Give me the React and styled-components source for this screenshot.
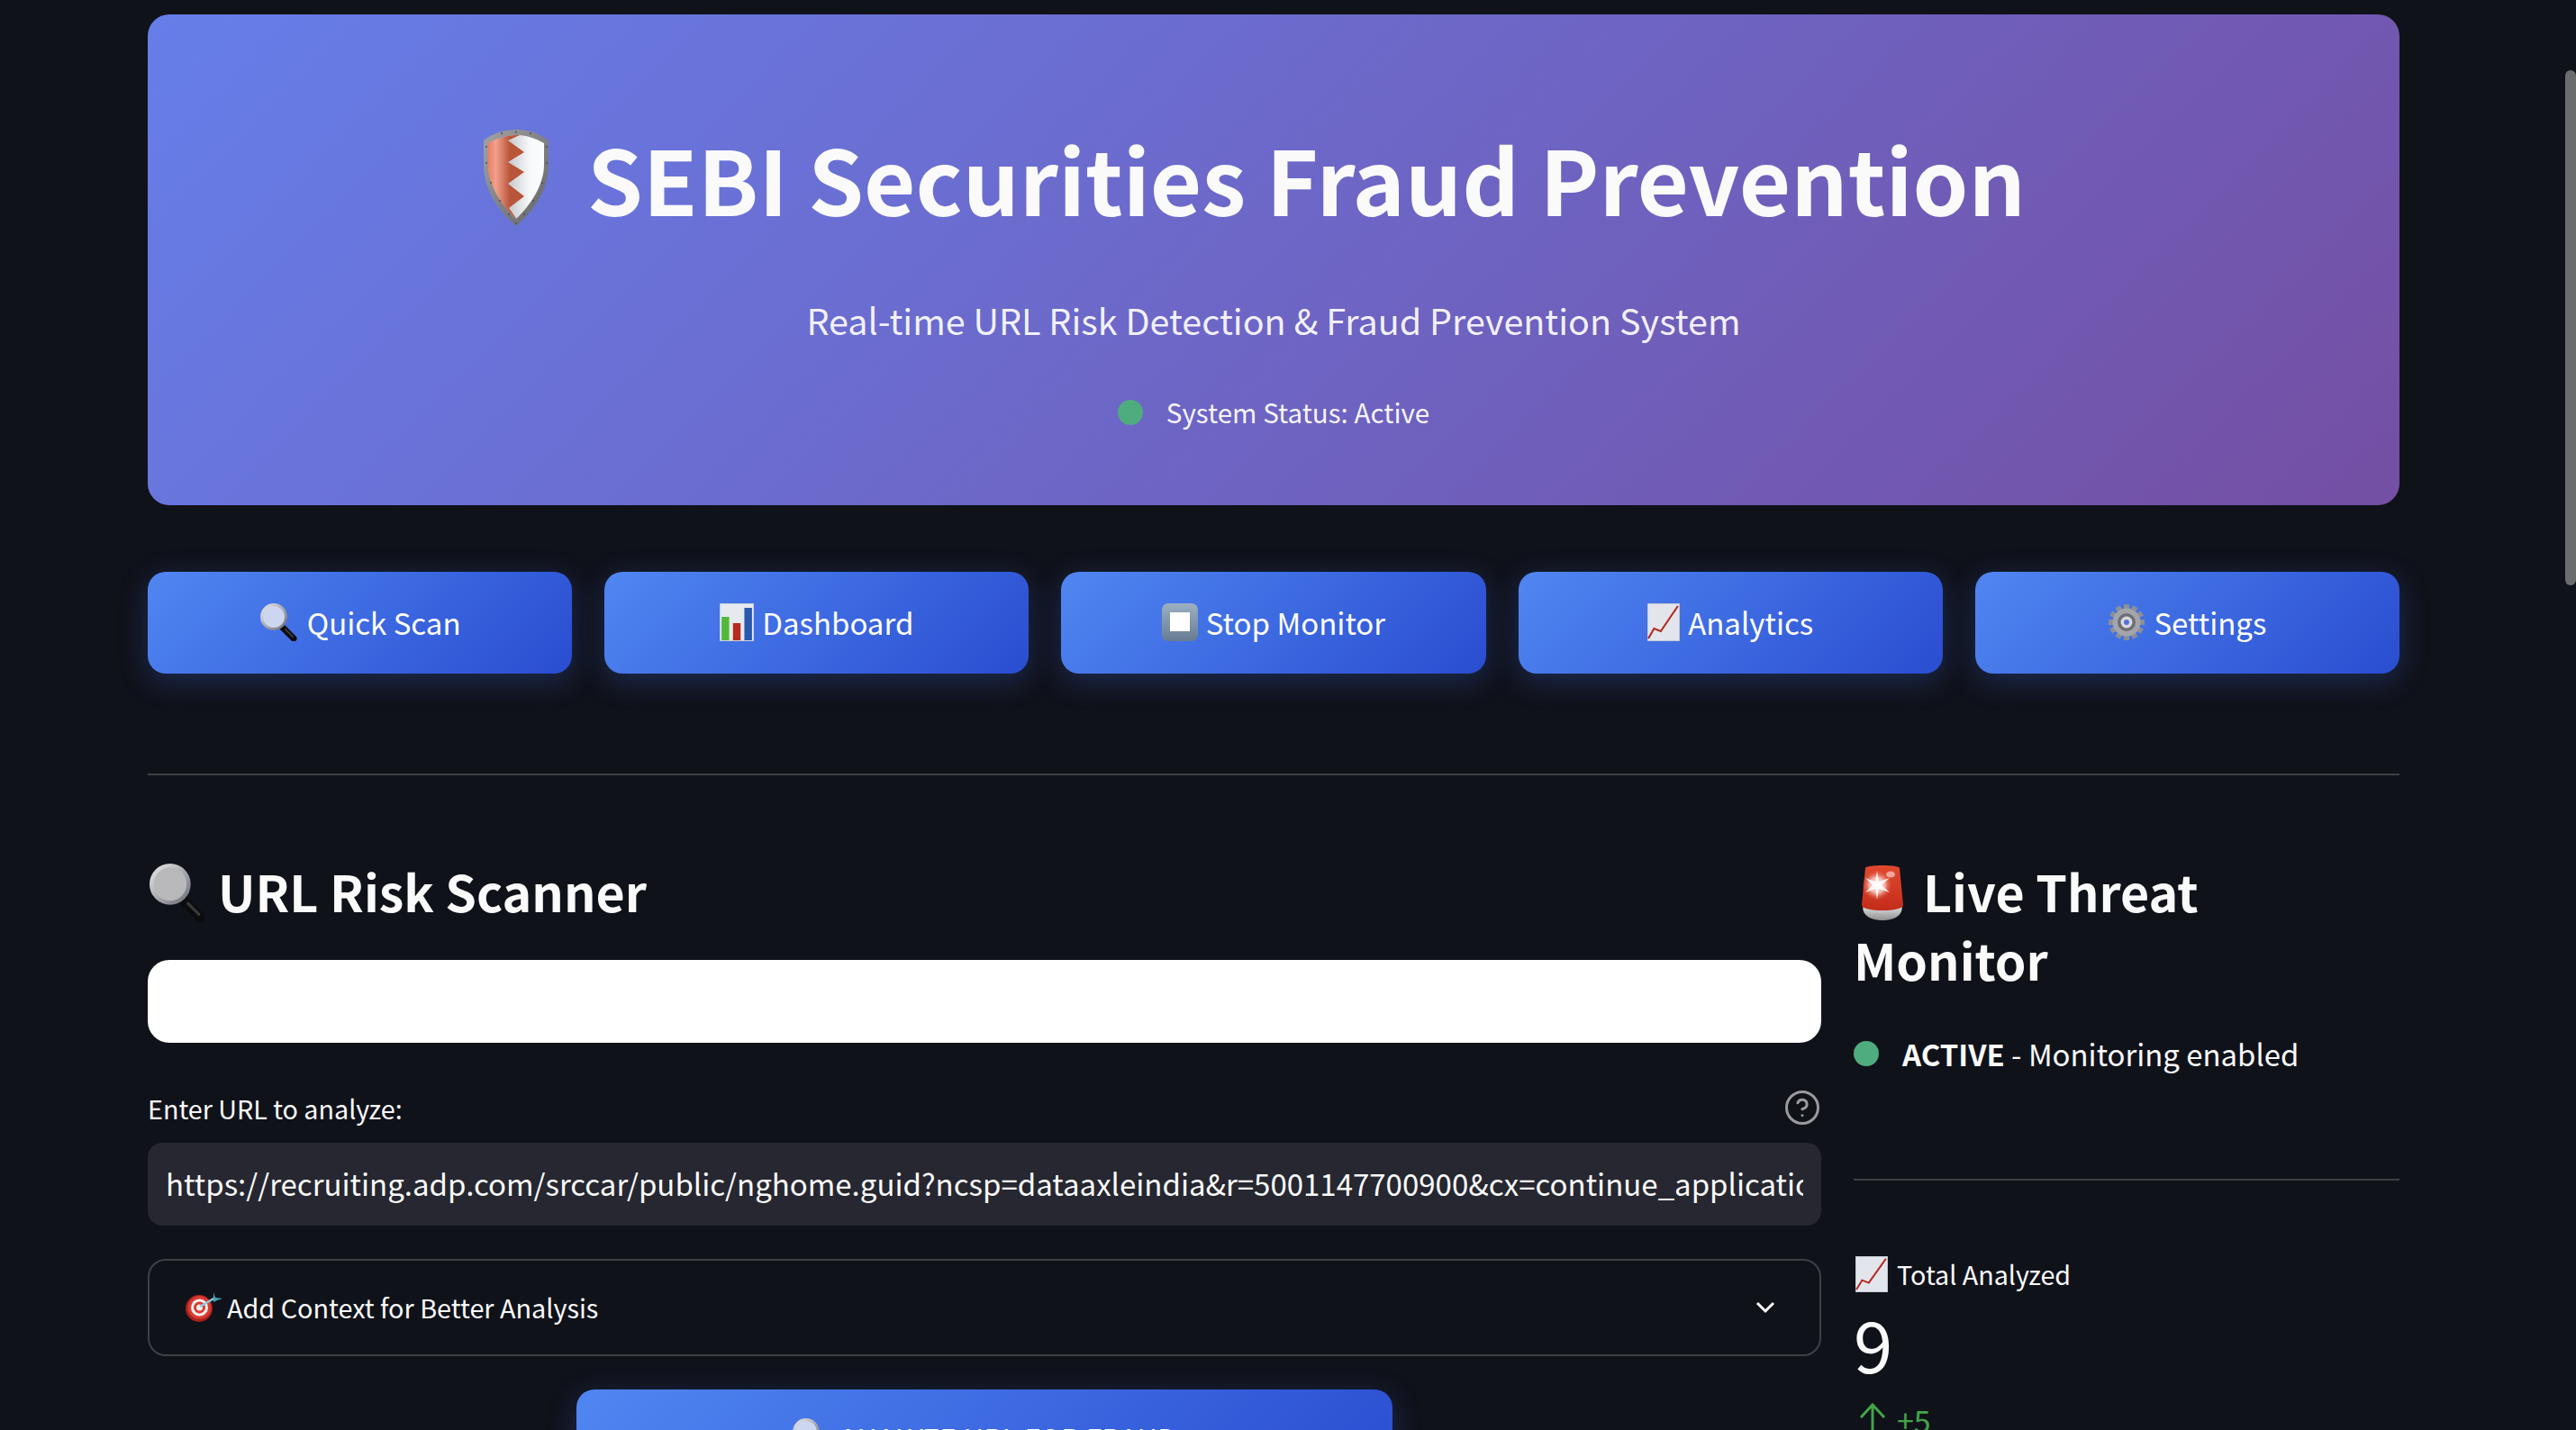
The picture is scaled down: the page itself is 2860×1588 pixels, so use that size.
import React from 'react';
import styled, { createGlobalStyle } from 'styled-components';
import { CircleHelp } from 'lucide-react';

const SANS = '"Noto Sans CJK SC", "Noto Sans", sans-serif';

const GlobalStyle = createGlobalStyle`
  html, body {
    margin: 0;
    height: 1588px;
    overflow: hidden;
    background: #10121a;
  }
  * { box-sizing: border-box; }
`;

const Page = styled.div`
  position: relative;
  height: 1588px;
  overflow: hidden;
  padding: 16px 196px 0 164px;
  background: #10121a;
  color: #fafafa;
  font-family: ${SANS};
`;

const ScrollThumb = styled.div`
  position: absolute;
  top: 78px;
  right: 0;
  width: 12px;
  height: 572px;
  border-radius: 6px;
  background: #6b6c70;
`;

const Hero = styled.header`
  height: 545px;
  padding-top: 125px;
  border-radius: 24px;
  background: linear-gradient(135deg, #667eea 0%, #744fa3 100%);
  display: flex;
  flex-direction: column;
  align-items: center;
`;

const HeroTitle = styled.h1`
  margin: 0 42px 0 0;
  display: flex;
  align-items: center;
  gap: 42px;
  font-size: 99px;
  line-height: 112px;
  font-weight: 700;
  color: #fafafa;
`;

const HeroSubtitle = styled.p`
  margin: 72px 0 0;
  font-size: 39.5px;
  line-height: 60px;
  color: rgba(255, 255, 255, 0.92);
`;

const HeroStatus = styled.div`
  margin-top: 51px;
  display: flex;
  align-items: center;
  gap: 26px;
  font-size: 29.6px;
  line-height: 44px;
  color: rgba(255, 255, 255, 0.95);
`;

const Dot = styled.span`
  flex: none;
  width: 28px;
  height: 28px;
  border-radius: 50%;
  background: #4fac7e;
`;

const NavRow = styled.nav`
  margin-top: 74px;
  display: grid;
  grid-template-columns: repeat(5, 1fr);
  gap: 36px;
`;

const GradientButton = styled.button`
  display: flex;
  align-items: center;
  justify-content: center;
  gap: 9px;
  border: none;
  padding: 0;
  color: #fff;
  font-family: ${SANS};
  font-size: 33px;
  background: linear-gradient(135deg, #5086f2 0%, #2a4dd0 100%);
  box-shadow: 0 8px 32px rgba(66, 112, 235, 0.28);
`;

const NavButton = styled(GradientButton)`
  height: 113px;
  padding-bottom: 2px;
  border-radius: 20px;
`;

const Divider = styled.hr`
  margin: ${(p) => p.$top}px 0 0;
  border: none;
  height: 2px;
  background: rgba(250, 250, 250, 0.2);
`;

const Columns = styled.div`
  margin-top: 90px;
  display: grid;
  grid-template-columns: 1858px 606px;
  column-gap: 36px;
`;

const Heading = styled.h2`
  margin: 0;
  font-size: 55.5px;
  line-height: 76px;
  font-weight: 600;
  color: #fafafa;
`;

const HeadingIcon = styled.span`
  display: inline-block;
  vertical-align: -10px;
  margin: 0 ${(p) => p.$gap}px 0 ${(p) => p.$left || 0}px;
`;

const WhiteBar = styled.div`
  margin-top: 39px;
  height: 92px;
  border-radius: 24px;
  background: #fff;
`;

const LabelRow = styled.div`
  margin-top: 52px;
  height: 42px;
  padding-bottom: 2px;
  display: flex;
  align-items: center;
  justify-content: space-between;
  font-size: 28.7px;
  color: #fafafa;
`;

const HelpIcon = styled(CircleHelp)`
  width: 42px;
  height: 42px;
  color: #9a9a9f;
`;

const UrlInput = styled.input`
  display: block;
  width: 100%;
  height: 92px;
  margin-top: 17px;
  padding: 0 20px 2px;
  border: none;
  outline: none;
  border-radius: 16px;
  background: #262730;
  color: #fafafa;
  font-family: ${SANS};
  font-size: 33px;
`;

const Expander = styled.div`
  margin-top: 37px;
  height: 108px;
  padding: 0 40px;
  border: 2px solid rgba(250, 250, 250, 0.2);
  border-radius: 20px;
  display: flex;
  align-items: center;
  justify-content: space-between;
`;

const ExpanderTitle = styled.span`
  display: flex;
  align-items: center;
  gap: 4px;
  padding-bottom: 2px;
  font-size: 28.8px;
`;

const CenterRow = styled.div`
  margin-top: 37px;
  display: flex;
  justify-content: center;
`;

const AnalyzeButton = styled(GradientButton)`
  width: 906px;
  height: 112px;
  padding-bottom: 6px;
  border-radius: 20px;
  font-size: 31px;
  letter-spacing: 0.5px;
`;

const StatusLine = styled.div`
  margin-top: 40px;
  display: flex;
  align-items: center;
  gap: 26px;
  font-size: 32.9px;
  line-height: 54px;
`;

const MetricLabel = styled.div`
  margin-top: 82px;
  padding-left: 2px;
  display: flex;
  align-items: center;
  gap: 10px;
  font-size: 28.7px;
  line-height: 44px;
`;

const MetricValue = styled.div`
  margin-top: 10px;
  font-size: 78px;
  line-height: 88px;
`;

const MetricDelta = styled.div`
  margin-top: 22px;
  display: flex;
  align-items: center;
  gap: 12px;
  padding-left: 6px;
  font-size: 34px;
  line-height: 40px;
  color: #43a548;
`;

const EmojiSvg = styled.svg`
  flex: none;
  display: block;
  width: ${(p) => p.$w}px;
  height: ${(p) => p.$h}px;
`;

const Magnifier = ({ w = 44, h = 42, lens = '#cdd6f0' }) => (
  <EmojiSvg $w={w} $h={h} viewBox="0 0 44 42">
    <defs>
      <linearGradient id="rim" x1="0" y1="0" x2="1" y2="1">
        <stop offset="0" stopColor="#e8e8ea" />
        <stop offset="1" stopColor="#6e7076" />
      </linearGradient>
    </defs>
    <path d="M24 25 L38 39" stroke="#0c0c0e" strokeWidth="7" strokeLinecap="round" />
    <path d="M29 29 L37 37" stroke="#3a3a3e" strokeWidth="2" strokeLinecap="round" />
    <circle cx="16" cy="15" r="13.5" fill={lens} stroke="url(#rim)" strokeWidth="3" />
  </EmojiSvg>
);

const BarChart = () => (
  <EmojiSvg $w={38} $h={42} viewBox="0 0 36 42" preserveAspectRatio="none">
    <rect width="36" height="42" fill="#e6eaef" stroke="#b4bbc6" strokeWidth="1" />
    <rect x="2" y="15" width="8" height="26" fill="#53b83a" />
    <rect x="14" y="22" width="8" height="19" fill="#b72a20" />
    <rect x="26" y="5" width="8" height="36" fill="#2a58ad" />
  </EmojiSvg>
);

const StopSquare = () => (
  <EmojiSvg $w={40} $h={42} viewBox="0 0 40 42">
    <defs>
      <linearGradient id="stopBg" x1="0" y1="0" x2="0" y2="1">
        <stop offset="0" stopColor="#9cb0c2" />
        <stop offset="1" stopColor="#667c92" />
      </linearGradient>
    </defs>
    <rect width="40" height="42" rx="7" fill="url(#stopBg)" />
    <rect x="9" y="10" width="22" height="21" fill="#fff" />
  </EmojiSvg>
);

const TrendChart = ({ w = 36, h = 42 }) => (
  <EmojiSvg $w={w} $h={h} viewBox="0 0 34 42" preserveAspectRatio="none">
    <rect width="34" height="42" fill="#e2e6ec" stroke="#a9b0ba" strokeWidth="1" />
    <path d="M1 39 L7 28 L14 31 L32 3" fill="none" stroke="#b52a20" strokeWidth="2" />
  </EmojiSvg>
);

const GEAR_TEETH = [0, 30, 60, 90, 120, 150, 180, 210, 240, 270, 300, 330];

const Gear = () => (
  <EmojiSvg $w={42} $h={42} viewBox="0 0 42 42">
    {GEAR_TEETH.map((deg) => (
      <rect key={deg} x="18" y="1" width="6" height="8" fill="#8c8f96" transform={`rotate(${deg} 21 21)`} />
    ))}
    <circle cx="21" cy="21" r="15.5" fill="#a3a5aa" />
    <circle cx="21" cy="21" r="10" fill="#6d6f75" />
    <circle cx="21" cy="21" r="6.5" fill="#d9dadd" />
    <circle cx="21" cy="21" r="3" fill="#5271d8" />
  </EmojiSvg>
);

const Siren = () => (
  <EmojiSvg $w={50} $h={64} viewBox="0 0 50 64">
    <defs>
      <linearGradient id="dome" x1="0" y1="0" x2="0" y2="1">
        <stop offset="0" stopColor="#e0492f" />
        <stop offset="1" stopColor="#c42c1b" />
      </linearGradient>
      <linearGradient id="base" x1="0" y1="0" x2="0" y2="1">
        <stop offset="0" stopColor="#e6e6e6" />
        <stop offset="1" stopColor="#8f8f8f" />
      </linearGradient>
      <radialGradient id="flare">
        <stop offset="0" stopColor="#ffffff" />
        <stop offset="0.5" stopColor="#fbd5cc" stopOpacity="0.8" />
        <stop offset="1" stopColor="#e0492f" stopOpacity="0" />
      </radialGradient>
    </defs>
    <path d="M4 46 C1 54 8 63 25 63 C42 63 49 54 46 46 Z" fill="url(#base)" />
    <path d="M6 5 C6 1 44 1 44 5 L48 46 C48 54 2 54 2 46 Z" fill="url(#dome)" />
    <circle cx="19" cy="24" r="17" fill="url(#flare)" />
    <path d="M19 8 L21 20 L33 16 L24 24 L33 32 L21 28 L19 40 L17 28 L6 32 L14 24 L6 16 L17 20 Z" fill="#fff" opacity="0.85" />
    <ellipse cx="34" cy="12" rx="5" ry="3.5" fill="#f2a79a" />
  </EmojiSvg>
);

const Target = () => (
  <EmojiSvg $w={42} $h={34} viewBox="0 0 42 34">
    <circle cx="15" cy="19" r="15" fill="#a81f1c" />
    <circle cx="15.5" cy="18" r="13" fill="#d63b33" />
    <circle cx="15.5" cy="18" r="9.5" fill="#f6f0ee" />
    <circle cx="15.5" cy="18" r="6.5" fill="#d63b33" />
    <circle cx="15.5" cy="18" r="3.5" fill="#f6f0ee" />
    <path d="M16 17 L33 7" stroke="#8fc8d6" strokeWidth="2.5" />
    <path d="M31 1 L33 7 L41 8 L35 10 L31 12 L31 7 Z" fill="#45a4b8" />
  </EmojiSvg>
);

const RIVETS = [
  [36, 3.5], [20, 5], [52, 5], [3, 20], [70, 20], [3, 38], [70, 38],
  [8, 60], [65, 60], [18, 80], [55, 80], [28, 95], [45, 95], [36, 105],
];

const Shield = () => (
  <EmojiSvg $w={73} $h={108} viewBox="0 0 73 108">
    <defs>
      <linearGradient id="shieldRim" x1="0" y1="0" x2="1" y2="1">
        <stop offset="0" stopColor="#a2a2a4" />
        <stop offset="1" stopColor="#636468" />
      </linearGradient>
      <linearGradient id="shieldRed" x1="0" y1="0" x2="1" y2="0">
        <stop offset="0" stopColor="#e8694a" />
        <stop offset="0.3" stopColor="#f2a08c" />
        <stop offset="0.65" stopColor="#b9553a" />
        <stop offset="1" stopColor="#b9553a" />
      </linearGradient>
      <linearGradient id="shieldWhite" x1="0" y1="0" x2="1" y2="0">
        <stop offset="0.3" stopColor="#b9bcc0" />
        <stop offset="0.7" stopColor="#f7f9fb" />
        <stop offset="1" stopColor="#ffffff" />
      </linearGradient>
      <clipPath id="shieldInner">
        <path d="M37 7 C48 7 58 11 67 16 L67 40 C67 62 52 85 36 100 C20 85 5 62 5 40 L5 16 C14 11 26 7 37 7 Z" />
      </clipPath>
    </defs>
    <path
      d="M36 1 C50 1 62 5 72 13 L72 40 C72 68 55 92 36 108 C17 92 0 68 0 40 L0 13 C10 5 22 1 36 1 Z"
      fill="url(#shieldRim)"
    />
    <g clipPath="url(#shieldInner)">
      <rect width="73" height="108" fill="url(#shieldWhite)" />
      <polygon
        points="0,0 40,7 27,13 45,26 27,37 45,48 27,61 45,75 28,88 38,102 0,108"
        fill="url(#shieldRed)"
      />
    </g>
    {RIVETS.map(([cx, cy]) => (
      <circle key={`${cx}-${cy}`} cx={cx} cy={cy} r="0.9" fill="#46474b" />
    ))}
  </EmojiSvg>
);

const Chevron = () => (
  <EmojiSvg $w={40} $h={40} viewBox="0 0 40 40">
    <path d="M11 15 L20 24 L29 15" fill="none" stroke="#fafafa" strokeWidth="3" />
  </EmojiSvg>
);

const UpArrow = () => (
  <EmojiSvg $w={30} $h={40} viewBox="0 0 30 40">
    <path d="M15 3 V40 M2 17 L15 3 L28 17" fill="none" stroke="#43a548" strokeWidth="3" />
  </EmojiSvg>
);

const NAV_ITEMS = [
  { label: 'Quick Scan', icon: <Magnifier /> },
  { label: 'Dashboard', icon: <BarChart /> },
  { label: 'Stop Monitor', icon: <StopSquare /> },
  { label: 'Analytics', icon: <TrendChart /> },
  { label: 'Settings', icon: <Gear /> },
];

const URL_VALUE =
  'https://recruiting.adp.com/srccar/public/nghome.guid?ncsp=dataaxleindia&r=5001147700900&cx=continue_application';

export default function App() {
  return (
    <Page>
      <GlobalStyle />
      <Hero>
        <HeroTitle>
          <Shield />
          SEBI Securities Fraud Prevention
        </HeroTitle>
        <HeroSubtitle>Real-time URL Risk Detection &amp; Fraud Prevention System</HeroSubtitle>
        <HeroStatus>
          <Dot />
          System Status: Active
        </HeroStatus>
      </Hero>

      <NavRow>
        {NAV_ITEMS.map((item) => (
          <NavButton key={item.label}>
            {item.icon}
            {item.label}
          </NavButton>
        ))}
      </NavRow>

      <Divider $top={111} />

      <Columns>
        <section>
          <Heading>
            <HeadingIcon $gap={10}>
              <Magnifier w={68} h={64} lens="#b9b9bc" />
            </HeadingIcon>
            URL Risk Scanner
          </Heading>
          <WhiteBar />
          <LabelRow>
            Enter URL to analyze:
            <HelpIcon strokeWidth={1.7} />
          </LabelRow>
          <UrlInput readOnly value={URL_VALUE} />
          <Expander>
            <ExpanderTitle>
              <Target />
              Add Context for Better Analysis
            </ExpanderTitle>
            <Chevron />
          </Expander>
          <CenterRow>
            <AnalyzeButton>
              <Magnifier />
              ANALYZE URL FOR FRAUD
            </AnalyzeButton>
          </CenterRow>
        </section>

        <aside>
          <Heading>
            <HeadingIcon $gap={20} $left={7}>
              <Siren />
            </HeadingIcon>
            Live Threat Monitor
          </Heading>
          <StatusLine>
            <Dot />
            <span>
              <b>ACTIVE</b> - Monitoring enabled
            </span>
          </StatusLine>
          <Divider $top={112} />
          <MetricLabel>
            <TrendChart w={36} h={40} />
            Total Analyzed
          </MetricLabel>
          <MetricValue>9</MetricValue>
          <MetricDelta>
            <UpArrow />
            +5
          </MetricDelta>
        </aside>
      </Columns>

      <ScrollThumb />
    </Page>
  );
}
